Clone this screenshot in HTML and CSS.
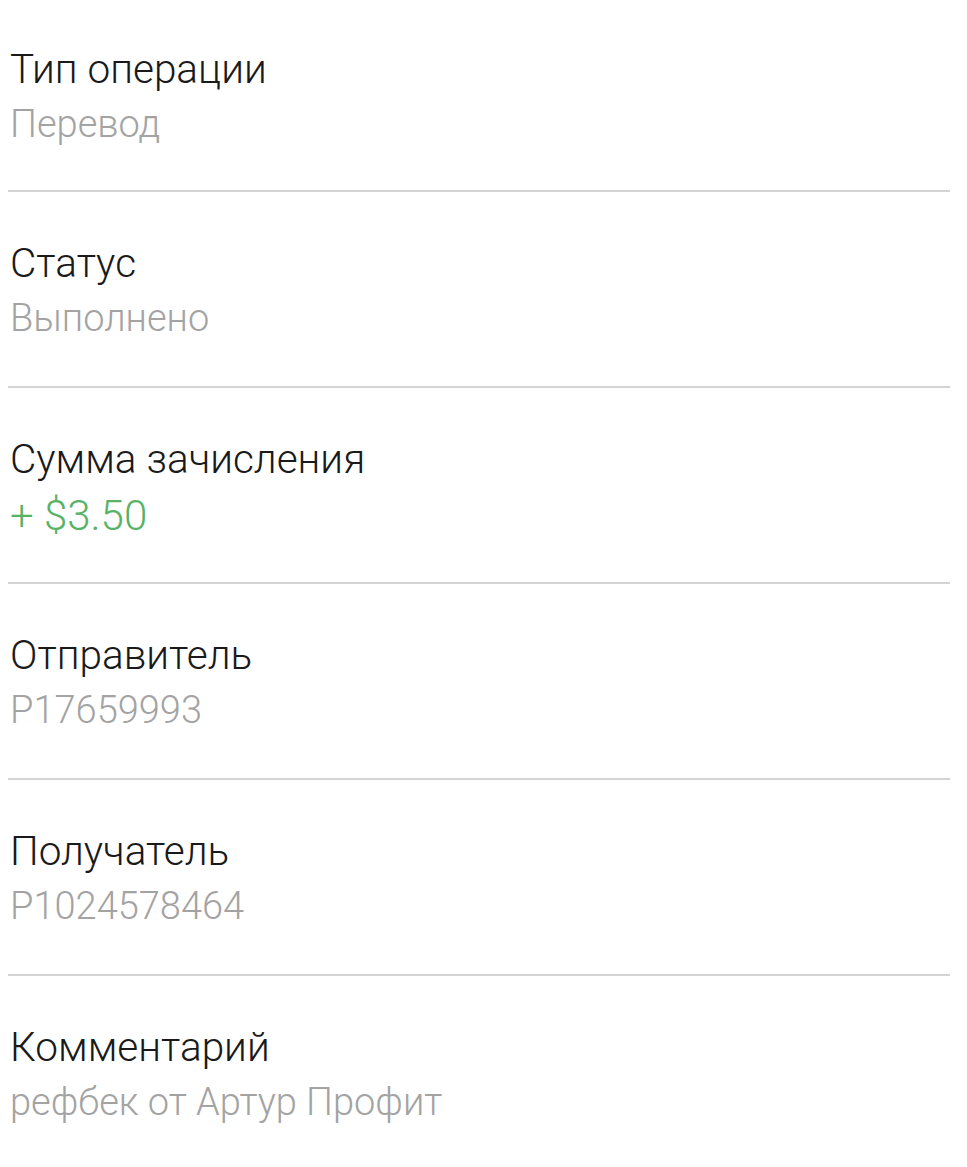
FILE: index.html
```html
<!DOCTYPE html>
<html>
<head>
  <meta charset="utf-8">
  <title>Детали операции</title>
  <link rel="stylesheet" href="styles.css">
</head>
<body>
  <div class="details">
    <div class="row">
      <div class="label">Тип операции</div>
      <div class="value">Перевод</div>
    </div>
    <div class="row">
      <div class="label">Статус</div>
      <div class="value">Выполнено</div>
    </div>
    <div class="row">
      <div class="label">Сумма зачисления</div>
      <div class="value income">+ $3.50</div>
    </div>
    <div class="row">
      <div class="label">Отправитель</div>
      <div class="value">P17659993</div>
    </div>
    <div class="row">
      <div class="label">Получатель</div>
      <div class="value">P1024578464</div>
    </div>
    <div class="row">
      <div class="label">Комментарий</div>
      <div class="value">рефбек от Артур Профит</div>
    </div>
  </div>
</body>
</html>
```

FILE: styles.css
```css
* {
  box-sizing: border-box;
  margin: 0;
  padding: 0;
}

body {
  font-family: Roboto, "Noto Sans", sans-serif;
  font-weight: 300;
  background-color: #fff;
}

.details {
  padding: 0 17px 0 8px;
}

.row {
  height: 196px;
  padding: 46px 0 0 2px;
  border-bottom: 2px solid #d4d4d4;
}

.row:first-child {
  height: 192px;
  padding-top: 44px;
}

.row:last-child {
  border-bottom: none;
}

.label {
  font-size: 40.5px;
  line-height: 50px;
  color: #1a1a1a;
}

.value {
  font-size: 38px;
  line-height: 50px;
  margin-top: 5px;
  color: #a3a3a3;
}

.value.income {
  font-size: 42px;
  margin-top: 7px;
  color: #58b266;
}
```
